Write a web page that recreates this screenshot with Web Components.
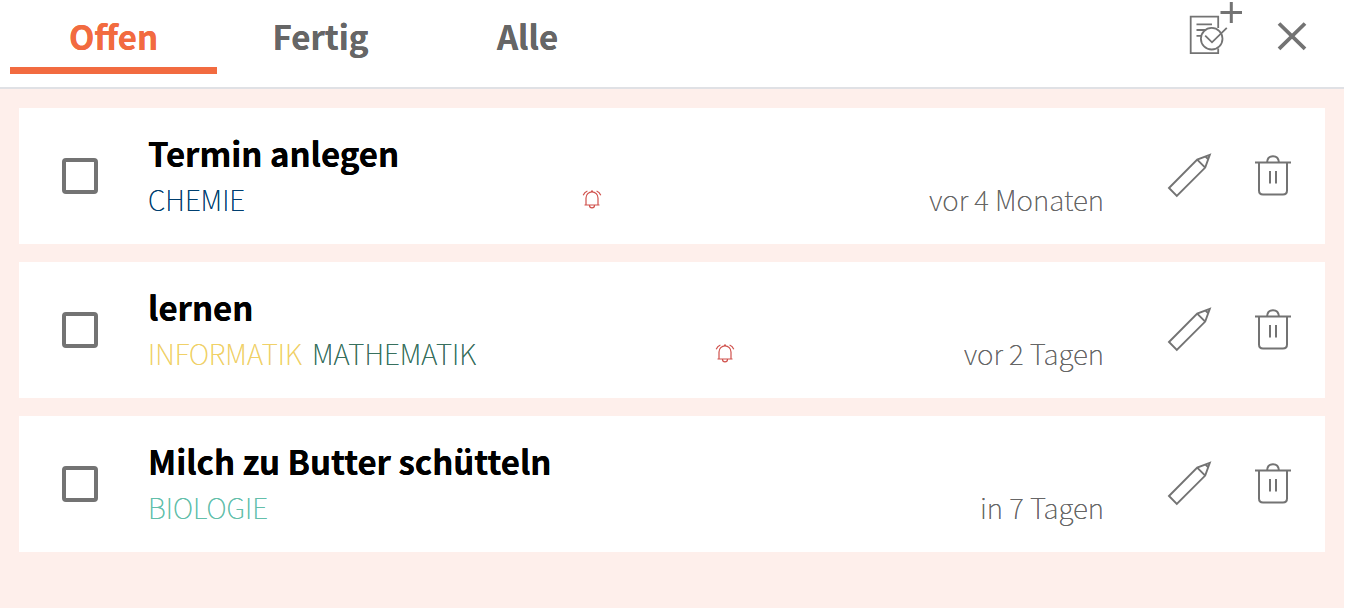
<!DOCTYPE html>
<html lang="de">
<head>
<meta charset="utf-8">
<meta name="viewport" content="width=device-width, initial-scale=1">
<title>Aufgaben</title>
<style>
  html { background: #fff; }
  body { margin: 0 2px 0 0; min-height: 100vh; display: flex; font-family: "Noto Sans CJK SC", "Noto Sans", sans-serif; color: #666; }
</style>
</head>
<body>
<task-app></task-app>

<template id="task-app">
  <style>
    :host { display: flex; flex-direction: column; flex: 1; min-width: 0; background: #feefeb; }
    header { display: flex; justify-content: space-between; background: #fff; border-bottom: 2px solid #e0e1e5; padding: 0 36px 13px 10px; }
    nav { display: flex; }
    .actions { display: flex; gap: 33px; }
    button { border: 0; padding: 0; background: none; color: #737373; cursor: pointer; height: 56px; }
    svg { display: block; fill: none; stroke: currentColor; }
    main { display: flex; flex-direction: column; gap: 18px; padding: 19px; }
  </style>
  <header>
    <nav aria-label="Filter">
      <task-tab active>Offen</task-tab>
      <task-tab>Fertig</task-tab>
      <task-tab>Alle</task-tab>
    </nav>
    <div class="actions">
      <button type="button" aria-label="Aufgabe hinzufügen">
        <svg width="56" height="56" viewBox="0 0 56 56">
          <g stroke-width="1.8">
            <path d="M31.2 28V16.6H3.7V53.2H31.2V48.5M9.5 24.3H25M9.5 30H19M9.5 35.8H15"/>
            <circle cx="24.7" cy="38.7" r="10.8"/>
            <path d="M18.2 35.7L25 42.3L39.8 27.8"/>
          </g>
          <path stroke-width="3" d="M33.5 12.5H55M44.3 2V23"/>
        </svg>
      </button>
      <button type="button" aria-label="Schließen">
        <svg width="32" height="56" viewBox="0 0 32 56"><path stroke-width="3.8" d="M3 23.5L29 48.8M29 23.5L3 48.8"/></svg>
      </button>
    </div>
  </header>
  <main>
    <task-card heading="Termin anlegen" due="vor 4 Monaten" overdue>
      <task-tag style="--tag: #003f70">CHEMIE</task-tag>
    </task-card>
    <task-card heading="lernen" due="vor 2 Tagen" overdue>
      <task-tag style="--tag: #f0d168">INFORMATIK</task-tag>
      <task-tag style="--tag: #38705e">MATHEMATIK</task-tag>
    </task-card>
    <task-card heading="Milch zu Butter schütteln" due="in 7 Tagen">
      <task-tag style="--tag: #63bfab">BIOLOGIE</task-tag>
    </task-card>
  </main>
</template>

<template id="task-tab">
  <style>
    :host { display: block; }
    button { display: block; min-width: 207px; box-sizing: border-box; border: 0; border-bottom: 7px solid transparent; padding: 12px 16px 7px; background: none; font: bold 33px/48px "Noto Sans CJK SC", "Noto Sans", sans-serif; color: #666; text-shadow: 0 0 0 currentColor; cursor: pointer; }
    :host([active]) button { color: #f26b40; border-color: #f26b40; }
  </style>
  <button type="button"><slot></slot></button>
</template>

<template id="task-tag">
  <style>
    :host { display: block; color: var(--tag); text-shadow: 0 0 0 currentColor; }
  </style>
  <slot></slot>
</template>

<template id="task-card">
  <style>
    :host { display: block; background: #fff; }
    article { display: flex; align-items: center; padding: 21px 34px 21px 43px; }
    input { appearance: none; flex: none; box-sizing: border-box; width: 36px; height: 36px; margin: 0 50px 0 0; border: 4px solid #737373; border-radius: 4px; background: #fff; }
    input:checked { background: #737373; }
    .body { flex: 1; min-width: 0; padding-bottom: 2px; }
    label { display: block; width: max-content; font-size: 33px; line-height: 48px; font-weight: bold; color: #000; text-shadow: 0 0 0 currentColor; }
    .meta { display: flex; justify-content: space-between; align-items: center; font-size: 28px; line-height: 44px; font-weight: 100; }
    .tags { display: flex; gap: 10px; padding-right: 10px; }
    time { text-shadow: 0 0 0 currentColor; }
    .bell { color: #d0514c; }
    svg { display: block; fill: none; stroke: currentColor; }
    .actions { display: flex; gap: 42px; padding: 0 0 2px 62px; }
    button { border: 0; padding: 0; background: none; color: #737373; cursor: pointer; }
    [hidden] { display: none; }
  </style>
  <article>
    <input type="checkbox" id="done">
    <div class="body">
      <label for="done"></label>
      <div class="meta">
        <div class="tags"><slot></slot></div>
        <svg class="bell" width="20" height="20" viewBox="0 0 20 20" role="img" aria-label="Überfällig">
          <path stroke-width="1.2" d="M2.5 16H17.5M4 16V9A6 6.2 0 0 1 16 9V16M7.5 16.4A2.5 2.4 0 0 0 12.5 16.4M9 2H11M1.2 6.2Q2.5 3.2 5.4 2M18.8 6.2Q17.5 3.2 14.6 2"/>
        </svg>
        <time></time>
      </div>
    </div>
    <div class="actions">
      <button type="button" aria-label="Bearbeiten">
        <svg width="47" height="46" viewBox="0 0 47 46"><path stroke-width="1.9" d="M3 36L31.2 7.6L43.8 2.8L39.2 15.6L10.8 44ZM31.2 7.6L39.2 15.6M39.5 4.5L42.5 7.5"/></svg>
      </button>
      <button type="button" aria-label="Löschen">
        <svg width="36" height="46" viewBox="0 0 36 46"><path stroke-width="2" d="M0 10.5H36M4 10.5V38.5Q4 42.5 8 42.5H28Q32 42.5 32 38.5V10.5M12 10.5Q12.5 4.3 18 4.3T24 10.5M15 19V31.5M21 19V31.5"/></svg>
      </button>
    </div>
  </article>
</template>

<script>
  class TemplateElement extends HTMLElement {
    constructor() {
      super();
      const template = document.getElementById(this.localName);
      this.attachShadow({ mode: "open" }).append(template.content.cloneNode(true));
    }
  }
  class TaskTag extends TemplateElement {}
  class TaskTab extends TemplateElement {
    connectedCallback() {
      const button = this.shadowRoot.querySelector("button");
      button.setAttribute("aria-pressed", String(this.hasAttribute("active")));
      button.addEventListener("click", () => {
        for (const tab of this.parentNode.children) {
          tab.toggleAttribute("active", tab === this);
          tab.shadowRoot.querySelector("button").setAttribute("aria-pressed", String(tab === this));
        }
      });
    }
  }
  class TaskCard extends TemplateElement {
    connectedCallback() {
      const root = this.shadowRoot;
      root.querySelector("label").textContent = this.getAttribute("heading");
      root.querySelector("time").textContent = this.getAttribute("due");
      root.querySelector(".bell").toggleAttribute("hidden", !this.hasAttribute("overdue"));
    }
  }
  class TaskApp extends TemplateElement {}
  customElements.define("task-tag", TaskTag);
  customElements.define("task-tab", TaskTab);
  customElements.define("task-card", TaskCard);
  customElements.define("task-app", TaskApp);
</script>
</body>
</html>
